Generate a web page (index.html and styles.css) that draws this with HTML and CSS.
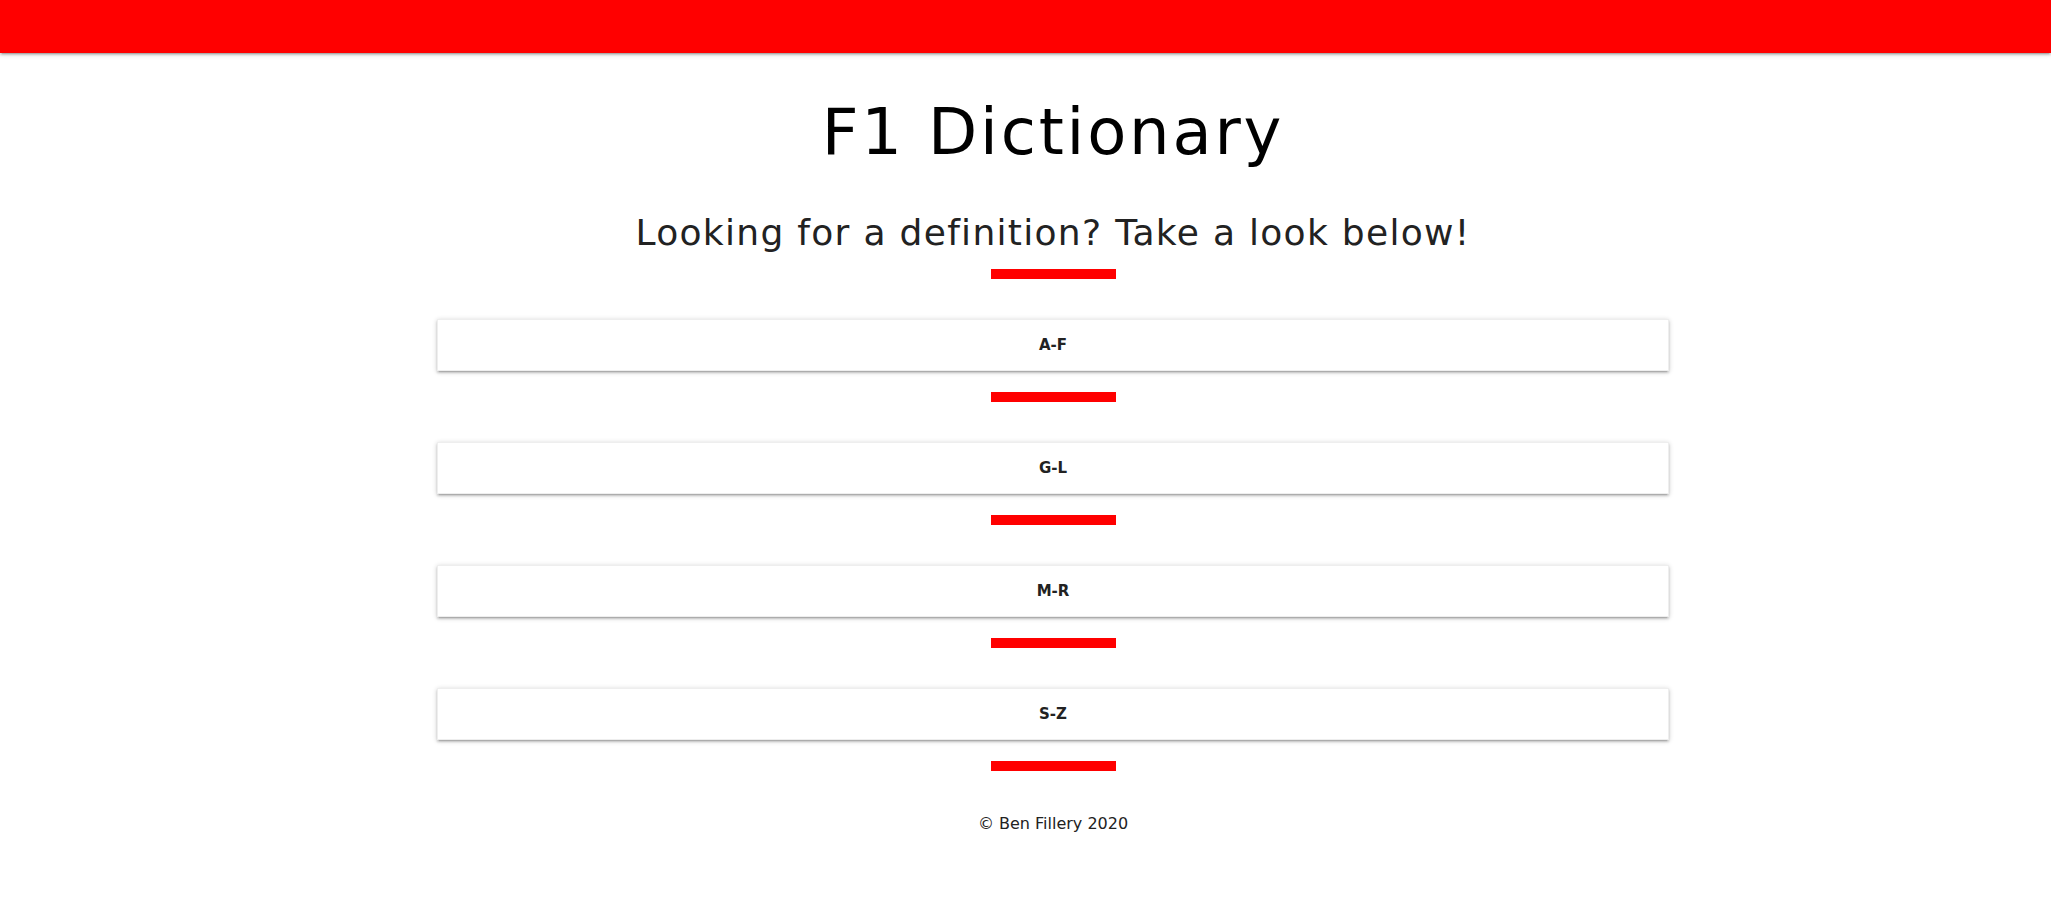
FILE: index.html
```html
<!DOCTYPE html>
<html lang="en">
<head>
<meta charset="utf-8">
<title>F1 Dictionary</title>
<link rel="stylesheet" href="styles.css">
</head>
<body>
<header class="topbar"></header>
<main class="page">
  <h1 class="title">F1 Dictionary</h1>
  <h2 class="subtitle">Looking for a definition? Take a look below!</h2>
  <div class="rule"></div>
  <ul class="sections">
    <li class="section">
      <div class="section-header">A-F</div>
      <div class="rule"></div>
    </li>
    <li class="section">
      <div class="section-header">G-L</div>
      <div class="rule"></div>
    </li>
    <li class="section">
      <div class="section-header">M-R</div>
      <div class="rule"></div>
    </li>
    <li class="section">
      <div class="section-header">S-Z</div>
      <div class="rule"></div>
    </li>
  </ul>
  <footer class="footer">© Ben Fillery 2020</footer>
</main>
</body>
</html>
```
FILE: styles.css
```css
html, body {
  margin: 0;
  padding: 0;
  background: #ffffff;
  font-family: "DejaVu Sans", "Liberation Sans", sans-serif;
}

.topbar {
  height: 53px;
  background: #ff0000;
  box-shadow: 0 2px 2px 0 rgba(0,0,0,0.14), 0 3px 1px -2px rgba(0,0,0,0.12), 0 1px 5px 0 rgba(0,0,0,0.2);
}

.page {
  padding-left: 55px;
  display: flex;
  flex-direction: column;
  align-items: center;
}

.title {
  margin: 41px 0 0;
  font-size: 64px;
  line-height: 76px;
  font-weight: normal;
  letter-spacing: 2.8px;
  color: #000;
}

.subtitle {
  margin: 41px 0 0;
  font-size: 36px;
  line-height: 43px;
  font-weight: normal;
  letter-spacing: 1.3px;
  color: #222;
}

.rule {
  width: 125px;
  height: 10px;
  background: #ff0000;
  margin: 15px auto 0;
}

.sections {
  list-style: none;
  margin: 40px 0 0;
  padding: 0;
  display: flex;
  flex-direction: column;
  gap: 40px;
}

.section {
  display: flex;
  flex-direction: column;
  align-items: center;
}

.section .rule {
  margin-top: 21px;
}

.section-header {
  width: 1232px;
  box-sizing: border-box;
  padding: 16px 0;
  text-align: center;
  font-size: 15px;
  line-height: 18px;
  font-weight: bold;
  color: #222;
  background: #fff;
  border: 1px solid #eee;
  box-shadow: 0 2px 2px 0 rgba(0,0,0,0.14), 0 3px 1px -2px rgba(0,0,0,0.12), 0 1px 5px 0 rgba(0,0,0,0.2);
}

.footer {
  margin-top: 43px;
  font-size: 16px;
  line-height: 19px;
  color: #222;
}
```
